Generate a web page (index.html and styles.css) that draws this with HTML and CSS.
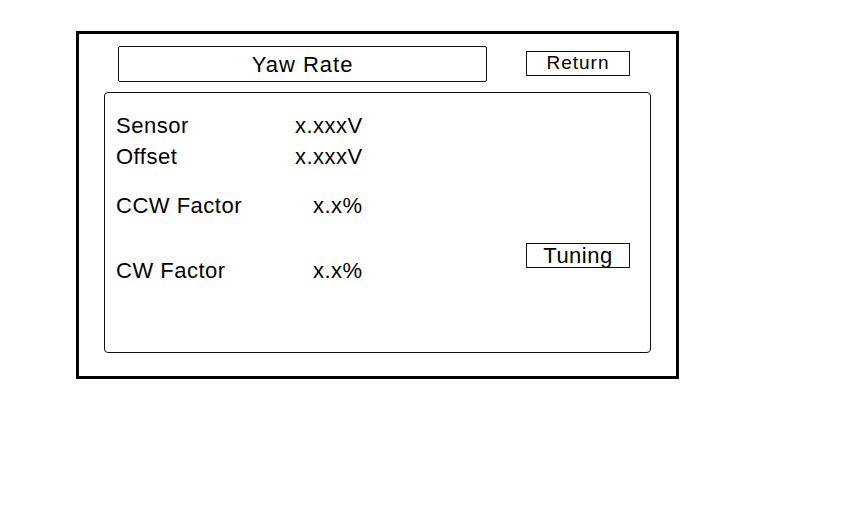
FILE: index.html
```html
<!DOCTYPE html>
<html>
<head>
<meta charset="utf-8">
<link rel="stylesheet" href="styles.css">
</head>
<body>
<div class="frame">
  <div class="header">
    <div class="title">Yaw Rate</div>
    <div class="btn btn-return">Return</div>
  </div>
  <div class="panel">
    <div class="rows">
      <div class="row"><span class="label">Sensor</span><span class="value">x.xxxV</span></div>
      <div class="row"><span class="label">Offset</span><span class="value">x.xxxV</span></div>
      <div class="row row-ccw"><span class="label">CCW Factor</span><span class="value value-pct">x.x%</span></div>
      <div class="row row-cw"><span class="label">CW Factor</span><span class="value value-pct">x.x%</span></div>
    </div>
    <div class="side">
      <div class="btn btn-tuning">Tuning</div>
    </div>
  </div>
</div>
</body>
</html>
```

FILE: styles.css
```css
* { box-sizing: border-box; }
html, body {
  margin: 0;
  padding: 0;
  background: #fff;
}
body {
  font-family: "Liberation Sans", Arial, sans-serif;
  color: #000;
  padding: 31px 0 0 76px;
}
.frame {
  width: 603px;
  height: 348px;
  border: 3px solid #000;
  display: flex;
  flex-direction: column;
}
.header {
  display: flex;
  align-items: flex-start;
  padding: 12px 0 0 39px;
  gap: 39px;
}
.title {
  width: 369px;
  height: 36px;
  border: 1px solid #111;
  border-radius: 2px;
  text-align: center;
  font-size: 22px;
  letter-spacing: 1px;
  line-height: 36px;
}
.btn {
  width: 104px;
  height: 25px;
  border: 1px solid #111;
  text-align: center;
}
.btn-return {
  margin-top: 5px;
  font-size: 19px;
  letter-spacing: 1px;
  line-height: 22px;
}
.btn-tuning {
  font-size: 22px;
  letter-spacing: 0.5px;
  line-height: 24px;
}
.panel {
  margin: 10px 0 0 25px;
  width: 547px;
  height: 261px;
  border: 1px solid #111;
  border-radius: 4px;
  display: flex;
  justify-content: space-between;
}
.rows {
  padding: 17px 0 0 11px;
  display: flex;
  flex-direction: column;
}
.row {
  display: grid;
  grid-template-columns: 179px auto;
  font-size: 22px;
  letter-spacing: 0.5px;
  line-height: 31px;
}
.row-ccw { margin-top: 18px; }
.row-cw { margin-top: 34px; }
.value-pct { padding-left: 18px; }
.side {
  padding: 150px 20px 0 0;
}
```
